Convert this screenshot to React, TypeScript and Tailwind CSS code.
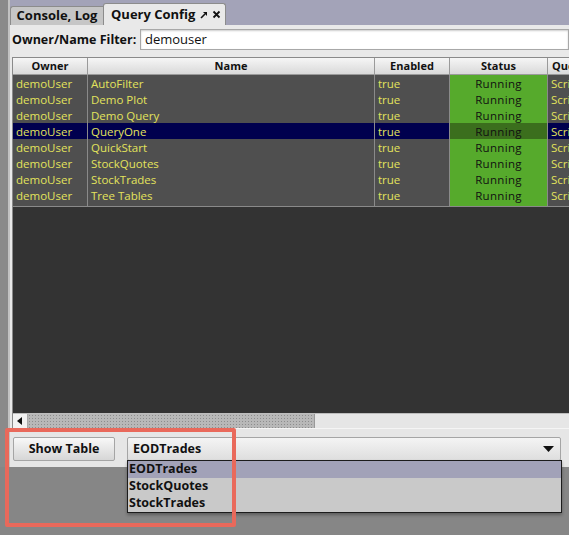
import React from 'react';

const rows = [
  { owner: 'demoUser', name: 'AutoFilter' },
  { owner: 'demoUser', name: 'Demo Plot' },
  { owner: 'demoUser', name: 'Demo Query' },
  { owner: 'demoUser', name: 'QueryOne', selected: true },
  { owner: 'demoUser', name: 'QuickStart' },
  { owner: 'demoUser', name: 'StockQuotes' },
  { owner: 'demoUser', name: 'StockTrades' },
  { owner: 'demoUser', name: 'Tree Tables' },
];

const options = ['EODTrades', 'StockQuotes', 'StockTrades'];

const cols = 'grid grid-cols-[75px_287px_75px_98px_1fr]';
const font = { fontFamily: '"Open Sans", "Liberation Sans", sans-serif' };

function HeaderCell({ children }: { children: React.ReactNode }) {
  return (
    <div className="flex items-center justify-center border-r border-b border-[#9a9a9a] bg-gradient-to-b from-[#f6f6f6] to-[#d9d9d9] text-[11px] font-bold text-[#111] whitespace-nowrap overflow-hidden">
      {children}
    </div>
  );
}

export default function App() {
  return (
    <div className="relative w-[569px] h-[535px] overflow-hidden bg-[#868686] select-none" style={font}>
      <div className="flex h-[467px]">
        {/* left desktop strip */}
        <div className="w-[8px] bg-[#8a8a8a]" />

        {/* main window */}
        <div className="flex-1 flex flex-col border-l-2 border-[#c2c2c2] bg-[#e9e9e9]">
          {/* Tab strip */}
          <div className="h-[25px] bg-[#a3a3b8] flex items-end">
            <div className="h-[19px] w-[93px] flex items-center justify-center bg-[#c6c6c6] border-t border-l border-[#8c8c8c] rounded-tl-[3px] text-[13px] font-bold text-[#111]">
              Console, Log
            </div>
            <div className="h-[22px] w-[123px] flex items-center pl-[7px] gap-[5px] bg-[#e9e9e9] border-t border-l border-r border-[#8c8c8c] rounded-t-[3px] text-[13px] font-bold text-[#111]">
              <span>Query Config</span>
              <span className="flex items-center gap-[4px]">
                <svg width="8" height="8" viewBox="0 0 8 8">
                  <path d="M1 7 L5 3" stroke="#111" strokeWidth="1.6" />
                  <path d="M3 1 H7 V5 Z" fill="#111" />
                </svg>
                <svg width="9" height="9" viewBox="0 0 9 9">
                  <path d="M1.5 1.5 L7.5 7.5 M7.5 1.5 L1.5 7.5" stroke="#111" strokeWidth="1.8" />
                </svg>
              </span>
            </div>
          </div>

          {/* Content */}
          <div className="h-[403px] flex flex-col pl-[2px]">
            {/* filter row */}
            <div className="h-[32px] flex items-start pt-[4px]">
              <span className="w-[128px] pt-[2px] text-[12.5px] font-bold text-[#111] whitespace-nowrap">Owner/Name Filter:</span>
              <div className="flex-1 h-[21px] bg-white border border-[#a8a8a8] shadow-[inset_0_1px_2px_rgba(0,0,0,0.2)] flex items-center pl-[4px] text-[13px] text-[#111]">
                demouser
              </div>
            </div>

            {/* table */}
            <div className="flex-1 flex flex-col border-l border-t border-[#8a8a8a] overflow-hidden">
              <div className={`${cols} h-[17px]`}>
                <HeaderCell>Owner</HeaderCell>
                <HeaderCell>Name</HeaderCell>
                <HeaderCell>Enabled</HeaderCell>
                <HeaderCell>Status</HeaderCell>
                <div className="flex items-center border-b border-[#9a9a9a] bg-gradient-to-b from-[#f6f6f6] to-[#d9d9d9] text-[11px] font-bold text-[#111] pl-[4px] overflow-hidden whitespace-nowrap">
                  Query Type
                </div>
              </div>
              <div className="flex-1 bg-[#333333]">
                {rows.map((r) => {
                  const bg = r.selected ? 'bg-[#00004e]' : 'bg-[#4f4f4f]';
                  const cell = `flex items-center pl-[3px] pb-[2px] border-r border-b border-[#8a8a8a] text-[11.5px] text-[#e3e35c] whitespace-nowrap overflow-hidden ${bg}`;
                  return (
                    <div key={r.name} className={`${cols} h-[16px]`}>
                      <div className={cell}>{r.owner}</div>
                      <div className={cell}>{r.name}</div>
                      <div className={cell}>true</div>
                      <div
                        className={`flex items-center justify-center pb-[2px] border-r border-b border-[#8a8a8a] text-[11.5px] tracking-[0.3px] text-[#111] ${
                          r.selected ? 'bg-[#3b6e1d]' : 'bg-[#56aa2c]'
                        }`}
                      >
                        Running
                      </div>
                      <div className={`${cell} border-r-0`}>Script</div>
                    </div>
                  );
                })}
              </div>
              {/* horizontal scrollbar */}
              <div className="h-[15px] flex bg-[#e6e6e6] border-t border-[#bdbdbd]">
                <div className="w-[15px] flex items-center justify-center bg-[#f2f2f2] border-r border-[#aaa]">
                  <svg width="6" height="8" viewBox="0 0 6 8">
                    <path d="M5 0 V8 L0 4 Z" fill="#111" />
                  </svg>
                </div>
                <div className="w-[287px] h-full bg-[#b8b8b8] bg-[radial-gradient(#8d8d8d_0.8px,transparent_0.9px)] bg-[length:3px_3px] border-r border-[#999]" />
                <div className="flex-1" />
              </div>
            </div>
          </div>

          {/* bottom panel */}
          <div className="h-[39px] flex items-start pt-[8px] pl-[3px] gap-[12px] bg-[#e6e6e6] border-t border-[#f5f5f5]">
            <div className="w-[102px] h-[24px] flex items-center justify-center bg-gradient-to-b from-[#f8f8f8] to-[#d6d6d6] border border-[#a5a5a5] rounded-[2px] text-[12.5px] font-bold text-[#111]">
              Show Table
            </div>
            <div className="w-[434px] h-[24px] flex items-center justify-between pl-[5px] pr-[6px] bg-gradient-to-b from-[#f4f4f4] to-[#dedede] border border-[#a5a5a5] rounded-[2px] text-[12.5px] font-bold text-[#111]">
              <span>EODTrades</span>
              <svg width="11" height="6" viewBox="0 0 11 6">
                <path d="M0 0 H11 L5.5 6 Z" fill="#111" />
              </svg>
            </div>
          </div>
        </div>
      </div>

      {/* dropdown popup */}
      <div className="absolute left-[127px] top-[460px] w-[435px] border border-[#1c1c1c] bg-[#c9c9c9] shadow-[0_2px_3px_rgba(0,0,0,0.3)]">
        {options.map((o, i) => (
          <div
            key={o}
            className={`h-[17px] flex items-center pl-[1px] text-[12.5px] font-bold text-[#111] ${
              i === 0 ? 'bg-[#a2a2b8]' : ''
            }`}
          >
            {o}
          </div>
        ))}
      </div>

      {/* annotation box */}
      <div className="absolute left-[5px] top-[428px] w-[231px] h-[99px] border-[4px] border-[#e9695b] rounded-[2px] pointer-events-none" />
    </div>
  );
}
